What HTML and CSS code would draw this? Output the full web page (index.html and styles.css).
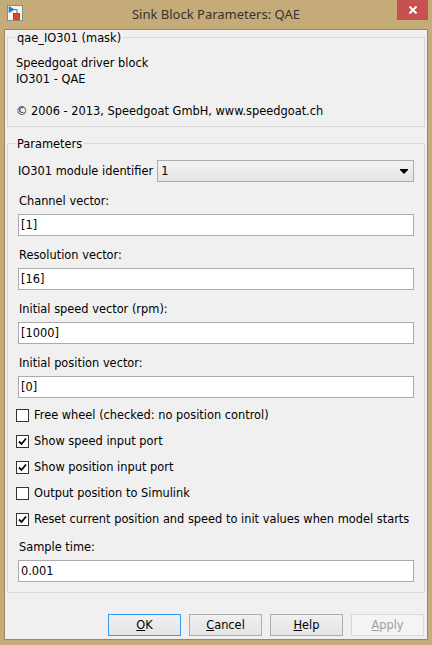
FILE: index.html
```html
<!DOCTYPE html>
<html>
<head>
<meta charset="utf-8">
<link rel="stylesheet" href="styles.css">
</head>
<body>
<div class="window">
  <div class="titlebar">
    <svg class="app-icon" width="16" height="16" viewBox="0 0 16 16">
      <rect x="0.5" y="0.5" width="15" height="15" fill="#f4f4f4" stroke="#8a8a8a"/>
      <path d="M2 1.5 L7 4.5 L2 7.5 Z" fill="#2a7fd0" stroke="#1a5fa8" stroke-width="0.6"/>
      <path d="M7 4.5 H10 V8.5" fill="none" stroke="#3a6fb0" stroke-width="1"/>
      <rect x="6.5" y="8.5" width="6" height="6" fill="#e04a1c" stroke="#a03010" stroke-width="0.8"/>
    </svg>
    <div class="title">Sink Block Parameters: QAE</div>
    <div class="close">
      <svg width="8" height="8" viewBox="0 0 8 8"><path d="M0.5 0.5 L7.5 7.5 M7.5 0.5 L0.5 7.5" stroke="#fff" stroke-width="2"/></svg>
    </div>
  </div>
  <div class="client">
    <div class="group group-mask">
      <div class="group-title">qae_IO301 (mask)</div>
      <div class="desc">
        <div>Speedgoat driver block</div>
        <div>IO301 - QAE</div>
        <div>&nbsp;</div>
        <div>© 2006 - 2013, Speedgoat GmbH, www.speedgoat.ch</div>
      </div>
    </div>
    <div class="group group-params">
      <div class="group-title">Parameters</div>
      <div class="select-row">
        <span class="select-label">IO301 module identifier</span>
        <div class="select">
          <span>1</span>
          <svg width="8" height="5" viewBox="0 0 8 5"><path d="M0 0 H8 V1 L4 5 L0 1 Z" fill="#000"/></svg>
        </div>
      </div>
      <div class="field">
        <div class="label">Channel vector:</div>
        <input class="text" type="text" value="[1]">
      </div>
      <div class="field">
        <div class="label">Resolution vector:</div>
        <input class="text" type="text" value="[16]">
      </div>
      <div class="field">
        <div class="label">Initial speed vector (rpm):</div>
        <input class="text" type="text" value="[1000]">
      </div>
      <div class="field">
        <div class="label">Initial position vector:</div>
        <input class="text" type="text" value="[0]">
      </div>
      <div class="checks">
        <div class="check"><span class="cb"></span><span>Free wheel (checked: no position control)</span></div>
        <div class="check"><span class="cb"><svg width="9" height="9" viewBox="0 0 9 9"><path d="M1 4.5 L3.5 7 L8 1.5" fill="none" stroke="#000" stroke-width="1.8"/></svg></span><span>Show speed input port</span></div>
        <div class="check"><span class="cb"><svg width="9" height="9" viewBox="0 0 9 9"><path d="M1 4.5 L3.5 7 L8 1.5" fill="none" stroke="#000" stroke-width="1.8"/></svg></span><span>Show position input port</span></div>
        <div class="check"><span class="cb"></span><span>Output position to Simulink</span></div>
        <div class="check"><span class="cb"><svg width="9" height="9" viewBox="0 0 9 9"><path d="M1 4.5 L3.5 7 L8 1.5" fill="none" stroke="#000" stroke-width="1.8"/></svg></span><span>Reset current position and speed to init values when model starts</span></div>
      </div>
      <div class="field field-sample">
        <div class="label">Sample time:</div>
        <input class="text" type="text" value="0.001">
      </div>
    </div>
    <div class="buttons">
      <button class="btn btn-default"><u>O</u>K</button>
      <button class="btn"><u>C</u>ancel</button>
      <button class="btn"><u>H</u>elp</button>
      <button class="btn btn-disabled"><u>A</u>pply</button>
    </div>
  </div>
</div>
</body>
</html>
```

FILE: styles.css
```css
* { box-sizing: border-box; }
html, body { margin: 0; padding: 0; }
body {
  width: 432px;
  height: 645px;
  overflow: hidden;
  background: #c4ab78;
  font-family: "DejaVu Sans", Verdana, sans-serif;
  font-size: 11.4px;
  color: #000;
}
.window {
  width: 432px;
  height: 645px;
  display: flex;
  flex-direction: column;
}
.titlebar {
  height: 29px;
  display: grid;
  grid-template-columns: 1fr auto 1fr;
  align-items: start;
}
.app-icon {
  margin: 5px 0 0 7px;
  justify-self: start;
}
.title {
  font-family: "Noto Sans", "Open Sans", sans-serif;
  font-size: 13px;
  color: #333;
  line-height: 20px;
  padding-top: 4px;
}
.close {
  justify-self: end;
  margin-right: 4px;
  width: 31px;
  height: 20px;
  background: #c75050;
  display: flex;
  align-items: center;
  justify-content: center;
}
.client {
  margin: 0 4px 5px 4px;
  height: 611px;
  border: 1px solid #9d8757;
  background: #f0f0f0;
  padding: 0 2px 3px 2px;
  display: flex;
  flex-direction: column;
}
.group {
  border: 1px solid #d9d9d9;
}
.group-title {
  margin: -7px 0 0 7px;
  padding: 0 2px;
  width: fit-content;
  background: #f0f0f0;
  line-height: 14px;
}
.group-mask {
  margin-top: 7px;
  height: 90px;
}
.desc {
  padding: 10px 0 0 8px;
  line-height: 16px;
}
.group-params {
  margin-top: 16px;
  height: 450px;
  padding: 0 10px;
}
.group-params .group-title {
  margin-left: -3px;
}
.select-row {
  margin-top: 9px;
  display: flex;
  align-items: center;
  gap: 4px;
}
.select-label { white-space: nowrap; }
.select {
  flex: 1;
  height: 22px;
  border: 1px solid #acacac;
  background: linear-gradient(#f2f2f2, #e5e5e5);
  display: flex;
  align-items: center;
  justify-content: space-between;
  padding: 0 5px 0 3px;
}
.field {
  margin-top: 11px;
}
.label {
  line-height: 16px;
  padding-left: 1px;
}
.text {
  display: block;
  width: 100%;
  height: 22px;
  margin: 5px 0 0 0;
  border: 1px solid #ababab;
  background: #fff;
  padding: 0 2px;
  font: inherit;
  color: #000;
  outline: none;
}
.checks {
  margin: 4px 0 0 -2px;
  display: flex;
  flex-direction: column;
}
.check {
  height: 26px;
  display: flex;
  align-items: center;
  gap: 5px;
  white-space: nowrap;
}
.cb {
  width: 13px;
  height: 13px;
  border: 1px solid #333;
  background: #fff;
  display: flex;
  align-items: center;
  justify-content: center;
  flex: none;
}
.field-sample {
  margin-top: 7px;
}
.buttons {
  margin-top: auto;
  display: flex;
  justify-content: flex-end;
  gap: 8px;
  padding-right: 1px;
}
.btn {
  width: 73px;
  height: 22px;
  border: 1px solid #adadad;
  background: linear-gradient(#f0f0f0, #e5e5e5);
  font: inherit;
  color: #000;
  padding: 0;
  margin: 0;
}
.btn-default {
  border-color: #3399ff;
}
.btn-disabled {
  border-color: #d9d9d9;
  background: #f4f4f4;
  color: #a0a0a0;
}
```
